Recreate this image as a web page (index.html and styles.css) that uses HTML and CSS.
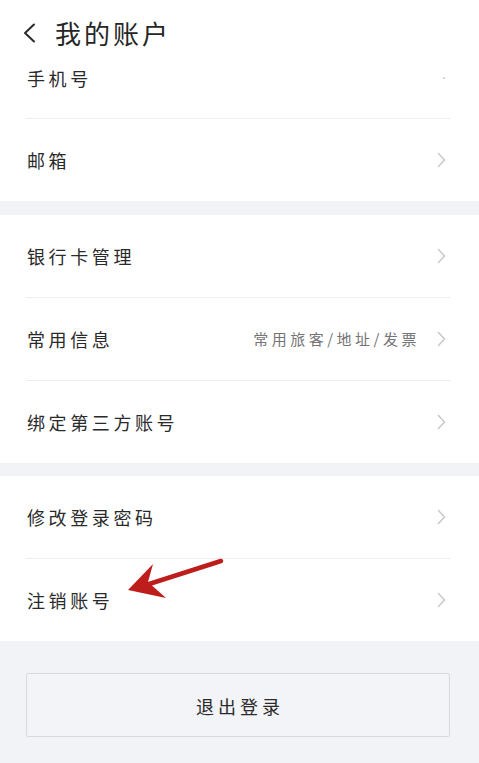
FILE: index.html
```html
<!DOCTYPE html>
<html lang="zh-CN">
<head>
<meta charset="utf-8">
<title>我的账户</title>
<link rel="stylesheet" href="styles.css">
</head>
<body>
<div class="page">
  <header class="header">
    <svg class="back" viewBox="0 0 14 20" width="14" height="20"><path d="M12 1.5 L3 10 L12 18.5" fill="none" stroke="#2a2a2a" stroke-width="2" stroke-linecap="round" stroke-linejoin="round"/></svg>
    <h1 class="title">我的账户</h1>
  </header>

  <section class="group top">
    <div class="row"><div class="row-inner first"><span class="label">手机号</span><span class="dot"></span></div></div>
    <div class="row"><div class="row-inner last"><span class="label">邮箱</span><svg class="chev" viewBox="0 0 9 16" width="9" height="16"><path d="M1 1 L7.5 8 L1 15" fill="none" stroke="#c6c6c6" stroke-width="1.4"/></svg></div></div>
  </section>

  <section class="group">
    <div class="row"><div class="row-inner"><span class="label">银行卡管理</span><svg class="chev" viewBox="0 0 9 16" width="9" height="16"><path d="M1 1 L7.5 8 L1 15" fill="none" stroke="#c6c6c6" stroke-width="1.4"/></svg></div></div>
    <div class="row"><div class="row-inner"><span class="label">常用信息</span><span class="sub">常用旅客/地址/发票</span><svg class="chev" viewBox="0 0 9 16" width="9" height="16"><path d="M1 1 L7.5 8 L1 15" fill="none" stroke="#c6c6c6" stroke-width="1.4"/></svg></div></div>
    <div class="row"><div class="row-inner last"><span class="label">绑定第三方账号</span><svg class="chev" viewBox="0 0 9 16" width="9" height="16"><path d="M1 1 L7.5 8 L1 15" fill="none" stroke="#c6c6c6" stroke-width="1.4"/></svg></div></div>
  </section>

  <section class="group">
    <div class="row"><div class="row-inner"><span class="label">修改登录密码</span><svg class="chev" viewBox="0 0 9 16" width="9" height="16"><path d="M1 1 L7.5 8 L1 15" fill="none" stroke="#c6c6c6" stroke-width="1.4"/></svg></div></div>
    <div class="row"><div class="row-inner last"><span class="label">注销账号</span><svg class="chev" viewBox="0 0 9 16" width="9" height="16"><path d="M1 1 L7.5 8 L1 15" fill="none" stroke="#c6c6c6" stroke-width="1.4"/></svg></div></div>
  </section>

  <div class="actions">
    <button class="logout" type="button">退出登录</button>
  </div>

  <svg class="arrow" viewBox="120 552 108 52" width="108" height="52">
    <path d="M221 561 L146 585" fill="none" stroke="#bd1d1b" stroke-width="4.5" stroke-linecap="round"/>
    <polygon points="128,590 153,564 148,582 166,598" fill="#bd1d1b"/>
  </svg>
</div>
</body>
</html>
```

FILE: styles.css
```css
html, body {
  margin: 0;
  padding: 0;
  background: #f2f3f7;
}
.page {
  position: relative;
  width: 479px;
  min-height: 763px;
  background: #f2f3f7;
  font-family: "Noto Sans CJK SC", "Noto Sans", sans-serif;
  color: #2a2a2a;
}
.header {
  height: 56px;
  box-sizing: border-box;
  padding: 20px 0 0 22px;
  background: #fff;
  display: flex;
  align-items: flex-start;
}
.back {
  display: block;
  margin-top: 3px;
}
.title {
  margin: 0 0 0 19px;
  font-size: 26px;
  font-weight: 400;
  line-height: 26px;
  letter-spacing: 3px;
  color: #262626;
}
.group {
  background: #fff;
  margin-bottom: 13px;
}
.group.top {
  margin-bottom: 14px;
}
.row {
  padding: 0 28px 0 26px;
}
.row-inner {
  height: 83px;
  box-sizing: border-box;
  border-bottom: 1px solid #eeeeef;
  display: flex;
  align-items: center;
  padding: 0 5px 0 1px;
}
.row-inner.first {
  height: 63px;
  padding-bottom: 18px;
}
.row-inner.last {
  height: 82px;
  border-bottom: none;
}
.label {
  flex: 1;
  font-size: 18px;
  letter-spacing: 3.6px;
  line-height: 24px;
}
.sub {
  font-size: 15px;
  letter-spacing: 3.5px;
  color: #747474;
  margin-right: 17px;
  line-height: 20px;
}
.chev {
  display: block;
}
.dot {
  width: 2px;
  height: 2px;
  border-radius: 1px;
  background: #c8c8c8;
  margin-right: 1px;
}
.actions {
  padding: 19px 29px 0 26px;
}
.logout {
  display: block;
  width: 424px;
  height: 64px;
  box-sizing: border-box;
  border: 1px solid #d9d9db;
  border-radius: 2px;
  background: #f3f4f7;
  font-family: "Noto Sans CJK SC", "Noto Sans", sans-serif;
  font-size: 18px;
  letter-spacing: 4px;
  padding: 2px 0 0 4px;
  color: #2a2a2a;
}
.arrow {
  position: absolute;
  left: 120px;
  top: 552px;
}
```
